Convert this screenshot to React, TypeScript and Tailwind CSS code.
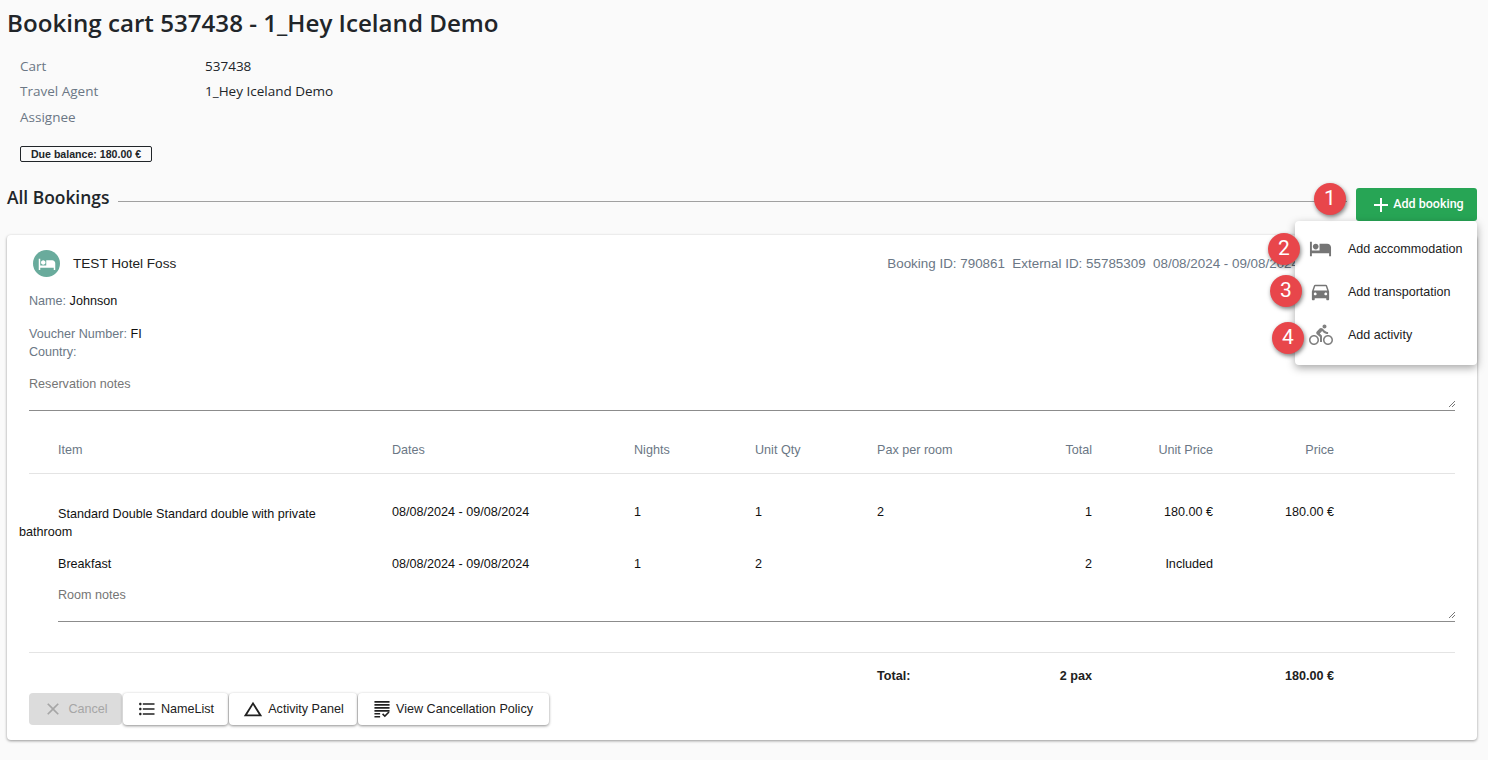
import React from "react";
import {
  MdAdd,
  MdChangeHistory,
  MdClose,
  MdDirectionsBike,
  MdDirectionsCar,
  MdFormatListBulleted,
  MdHotel,
} from "react-icons/md";

const columns = "grid grid-cols-[334px_242px_121px_122px_94px_121px_121px_121px]";
const resizer =
  "absolute right-0 bottom-[3px] h-[7px] w-[7px] bg-[linear-gradient(135deg,transparent_50%,#777_50%,#777_60%,transparent_60%,transparent_75%,#777_75%,#777_85%,transparent_85%)]";

function PolicyIcon({ className }: { className?: string }) {
  return (
    <svg viewBox="0 0 16 18" className={className} fill="currentColor">
      <path d="M0 0h16v1.8H0zM0 3.2h16v1.8H0zM0 6.4h16v1.8H0zM0 9.6h16v1.8H0zM0 12.8h6v1.6H0zM0 16h6v1.6H0z" />
      <path d="M8 14.2l1.2-1.1 1.8 1.8 3.8-3.9 1.2 1.1-5 5.1z" />
    </svg>
  );
}

function Badge({ n, className }: { n: number; className: string }) {
  return (
    <div
      className={`absolute flex h-[32px] w-[32px] items-center justify-center rounded-full bg-[#e8464b] font-['Roboto',sans-serif] text-[21px] text-white shadow-[1px_2px_4px_rgba(0,0,0,0.5)] ${className}`}
    >
      {n}
    </div>
  );
}

function InfoRow({ label, value, className }: { label: string; value?: string; className: string }) {
  return (
    <div className={`flex ${className}`}>
      <span className="w-[185px] text-[#6b7785]">{label}</span>
      <span className="text-[#212529]">{value}</span>
    </div>
  );
}

function MenuItem({ icon, label, className }: { icon: React.ReactNode; label: string; className: string }) {
  return (
    <div className={`flex items-center ${className}`}>
      <div className="flex w-[53px] justify-start pl-[14px] text-[#757575]">{icon}</div>
      <span className="pt-[2px] text-[12.55px] text-[#212121]">{label}</span>
    </div>
  );
}

function ActionButton({ icon, label, className }: { icon: React.ReactNode; label: string; className: string }) {
  return (
    <button
      className={`flex h-[32px] items-center justify-center gap-[4px] rounded-[4px] bg-white text-[12.6px] text-[#212121] shadow-[0_1px_3px_rgba(0,0,0,0.45)] ${className}`}
    >
      {icon}
      {label}
    </button>
  );
}

export default function App() {
  return (
    <div className="relative h-[760px] overflow-hidden bg-[#fafafa] font-['Liberation_Sans',sans-serif]">
      <div className="pl-[7px] pr-[11px]">
        <h1 className="pt-[5px] font-['Open_Sans',sans-serif] text-[24.15px] leading-[36px] font-semibold text-[#212529]">
          Booking cart 537438 - 1_Hey Iceland Demo
        </h1>

        <div className="pt-[15px] pl-[13px] font-['Open_Sans',sans-serif] text-[13.5px] leading-[20px]">
          <InfoRow label="Cart" value="537438" className="h-[25px]" />
          <InfoRow label="Travel Agent" value="1_Hey Iceland Demo" className="h-[26px]" />
          <InfoRow label="Assignee" className="h-[26px]" />
          <div className="mt-[13px] flex h-[16px] w-[132px] items-center justify-center rounded-[2px] border border-[#212529] font-['Liberation_Sans',sans-serif] text-[10.6px] font-bold text-[#212529]">
            Due balance: 180.00 €
          </div>
        </div>

        <div className="mt-[26px] flex h-[33px] items-start">
          <h2 className="font-['Open_Sans',sans-serif] text-[17.4px] leading-[19px] font-semibold text-[#212529]">
            All Bookings
          </h2>
          <div className="mx-[9px] mt-[13px] h-px flex-1 bg-[#a0a0a0]" />
          <button className="flex h-[33px] w-[121px] items-center justify-center rounded-[3px] bg-[#27a555] font-['Roboto',sans-serif] text-[12.5px] font-medium text-white">
            <MdAdd className="h-[24px] w-[24px]" />
            Add booking
          </button>
        </div>

        <div className="mt-[14px] h-[505px] rounded-[4px] bg-white pl-[22px] pr-[22px] text-[12.6px] shadow-[0_1px_3px_rgba(0,0,0,0.4)]">
          <div className="flex h-[57px] items-center">
            <div className="ml-[4px] flex h-[27px] w-[27px] items-center justify-center rounded-full bg-[#69ab9c] text-white">
              <MdHotel className="h-[18px] w-[18px]" />
            </div>
            <span className="mt-[2px] ml-[13px] text-[13.6px] text-[#212121]">TEST Hotel Foss</span>
            <span className="mt-[2px] ml-auto whitespace-pre pr-[156px] text-[13.4px] text-[#6b7785]">
              Booking ID: 790861  External ID: 55785309  08/08/2024 - 09/08/2024
            </span>
          </div>

          <div className="flex h-[18px] items-center text-[#6b7785]">
            Name:&nbsp;<span className="text-[#111]">Johnson</span>
          </div>
          <div className="mt-[15px] flex h-[18px] items-center text-[#6b7785]">
            Voucher Number:&nbsp;<span className="text-[#111]">FI</span>
          </div>
          <div className="flex h-[18px] items-center text-[#6b7785]">Country:</div>

          <div className="relative mt-[13px] h-[37px] border-b border-[#8c8c8c] pt-[1px] text-[#757575]">
            Reservation notes
            <div className={resizer} />
          </div>

          <div className={`${columns} mt-[30px] h-[33px] border-b border-[#e4e4e4] pl-[29px] text-[#6b7785]`}>
            <span>Item</span>
            <span>Dates</span>
            <span>Nights</span>
            <span>Unit Qty</span>
            <span>Pax per room</span>
            <span className="text-right">Total</span>
            <span className="text-right">Unit Price</span>
            <span className="text-right">Price</span>
          </div>

          <div className={`${columns} mt-[29px] h-[41px] pl-[29px] text-[#111]`}>
            <span className="-ml-[39px] w-[300px] pt-[2px] leading-[18px] [text-indent:39px]">
              Standard Double Standard double with private bathroom
            </span>
            <span>08/08/2024 - 09/08/2024</span>
            <span>1</span>
            <span>1</span>
            <span>2</span>
            <span className="text-right">1</span>
            <span className="text-right">180.00 €</span>
            <span className="text-right">180.00 €</span>
          </div>
          <div className={`${columns} mt-[10px] h-[18px] pl-[29px] pt-px text-[#111]`}>
            <span>Breakfast</span>
            <span>08/08/2024 - 09/08/2024</span>
            <span>1</span>
            <span>2</span>
            <span />
            <span className="text-right">2</span>
            <span className="text-right">Included</span>
            <span />
          </div>

          <div className="relative mt-[13px] ml-[29px] h-[37px] border-b border-[#8c8c8c] pt-px text-[#757575]">
            Room notes
            <div className={resizer} />
          </div>

          <div className={`${columns} mt-[30px] h-[41px] items-center border-t border-[#e4e4e4] pt-[6px] pl-[29px] font-bold text-[#212121]`}>
            <span />
            <span />
            <span />
            <span />
            <span>Total:</span>
            <span className="text-right">2 pax</span>
            <span />
            <span className="text-right">180.00 €</span>
          </div>

          <div className="flex gap-px">
            <button className="flex h-[32px] w-[93px] items-center justify-center gap-[5px] rounded-[4px] bg-[#dcdcdc] text-[#a6a6a6]">
              <MdClose className="h-[20px] w-[20px]" />
              Cancel
            </button>
            <ActionButton
              icon={<MdFormatListBulleted className="h-[20px] w-[20px]" />}
              label="NameList"
              className="w-[105px]"
            />
            <ActionButton
              icon={<MdChangeHistory className="h-[22px] w-[22px]" />}
              label="Activity Panel"
              className="w-[128px] gap-[3px]"
            />
            <ActionButton
              icon={<PolicyIcon className="h-[17px] w-[16px]" />}
              label="View Cancellation Policy"
              className="w-[191px] gap-[6px]"
            />
          </div>
        </div>
      </div>

      <div className="absolute top-[221px] left-[1295px] flex h-[144px] w-[182px] flex-col rounded-[4px] bg-white pt-[6px] shadow-[0_3px_8px_rgba(0,0,0,0.35)]">
        <MenuItem icon={<MdHotel className="h-[23px] w-[23px]" />} label="Add accommodation" className="h-[43px]" />
        <MenuItem icon={<MdDirectionsCar className="h-[23px] w-[23px]" />} label="Add transportation" className="h-[43px]" />
        <MenuItem icon={<MdDirectionsBike className="h-[24px] w-[24px] text-[#808080]" />} label="Add activity" className="h-[43px]" />
      </div>

      <Badge n={1} className="top-[183px] left-[1314px]" />
      <Badge n={2} className="top-[233px] left-[1268px]" />
      <Badge n={3} className="top-[275px] left-[1270px]" />
      <Badge n={4} className="top-[322px] left-[1272px]" />
    </div>
  );
}
